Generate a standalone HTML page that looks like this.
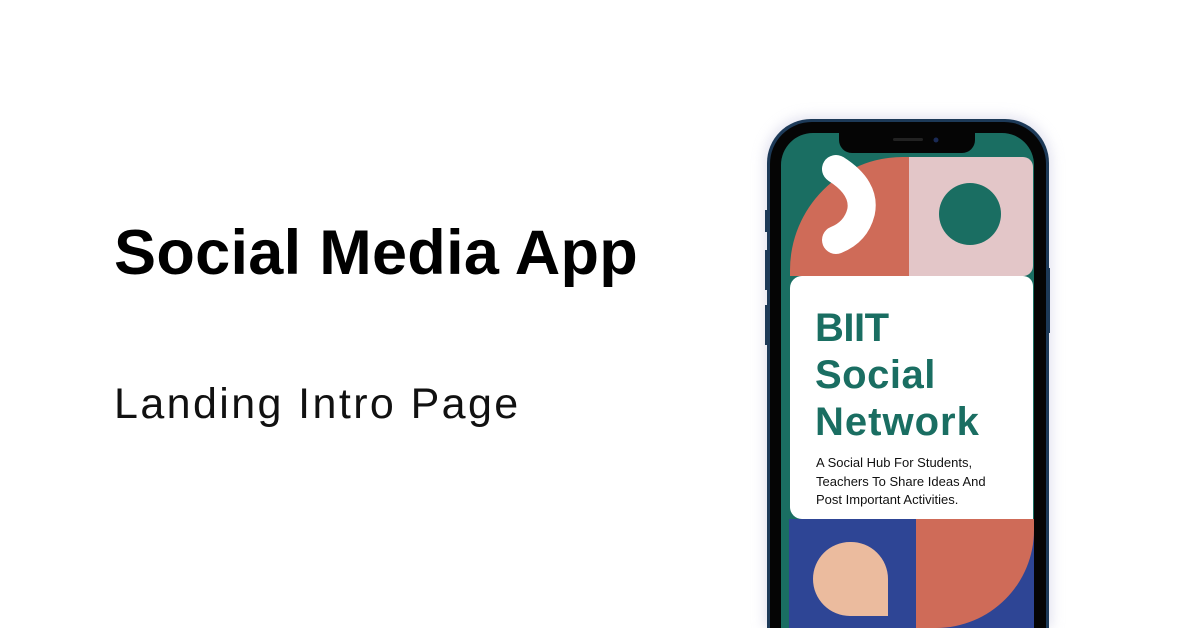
<!DOCTYPE html>
<html><head><meta charset="utf-8"><style>
html,body{margin:0;padding:0;width:1200px;height:628px;overflow:hidden;}
body{background:#fff;position:relative;font-family:"Liberation Sans",sans-serif;}
.t1{position:absolute;left:114px;top:218px;font-size:63px;font-weight:bold;color:#000;white-space:nowrap;letter-spacing:0.3px;line-height:70px;}
.t2{position:absolute;left:114px;top:379px;font-size:43px;color:#111;white-space:nowrap;line-height:50px;font-weight:normal;letter-spacing:2.4px;}
svg{display:block;}
</style></head><body>
<div class="t1">Social Media App</div>
<div class="t2">Landing Intro Page</div>
<svg width="1200" height="628" viewBox="0 0 1200 628" style="position:absolute;left:0;top:0">
<defs>
<filter id="sh" x="-20%" y="-20%" width="140%" height="140%"><feGaussianBlur stdDeviation="6"/></filter>
<clipPath id="scr"><path d="M813 133 H1002 A32 32 0 0 1 1034 165 V628 H781 V165 A32 32 0 0 1 813 133 Z"/></clipPath>
</defs>
<path d="M810 116 H1006 A46 46 0 0 1 1052 162 V628 H764 V162 A46 46 0 0 1 810 116 Z" fill="#c8c8e0" opacity="0.5" filter="url(#sh)"/>
<path d="M811 119 H1005 A44 44 0 0 1 1049 163 V628 H767 V163 A44 44 0 0 1 811 119 Z" fill="#1d3a58"/>
<path d="M812 122 H1004 A42 42 0 0 1 1046 164 V628 H770 V164 A42 42 0 0 1 812 122 Z" fill="#050505"/>
<rect x="765" y="210" width="3" height="22" fill="#1d3a58"/>
<rect x="765" y="250" width="3" height="40" fill="#1d3a58"/>
<rect x="765" y="305" width="3" height="40" fill="#1d3a58"/>
<rect x="1047" y="268" width="3" height="65" fill="#1d3a58"/>
<g clip-path="url(#scr)">
<rect x="781" y="133" width="253" height="495" fill="#1a6e62"/>
<path d="M790 276 V270 A113 113 0 0 1 903 157 H909 V276 Z" fill="#cf6b58"/>
<path d="M909 157 H1023 A10 10 0 0 1 1033 167 V266 A10 10 0 0 1 1023 276 H909 Z" fill="#e3c6c8"/>
<circle cx="970" cy="214" r="31" fill="#1a6e62"/>
<path d="M836 169 Q866 188 861 212 Q856 232 836 240" fill="none" stroke="#fff" stroke-width="28" stroke-linecap="round"/>
<rect x="789" y="519" width="245" height="109" fill="#2e4595"/>
<path d="M916 519 H1034 V530 A98 98 0 0 1 936 628 H916 Z" fill="#cf6b58"/>
<path d="M850 542 A37 37 0 0 1 888 579 V616 H850 A37 37 0 0 1 813 579 A37 37 0 0 1 850 542 Z" fill="#ebbb9e"/>
<path d="M802 276 H1023 A10 10 0 0 1 1033 286 V519 H802 A12 12 0 0 1 790 507 V288 A12 12 0 0 1 802 276 Z" fill="#fff"/>
</g>
<path d="M839 133 H975 V140 A13 13 0 0 1 962 153 H852 A13 13 0 0 1 839 140 Z" fill="#050505"/>
<rect x="893" y="138" width="30" height="3" rx="1.5" fill="#222"/>
<circle cx="936" cy="140" r="2.5" fill="#1a2a55"/>
<g font-family="Liberation Sans, sans-serif" fill="#1a6e62" font-weight="bold" font-size="40">
<text x="815" y="341" letter-spacing="-0.5">BIIT</text>
<text x="815" y="388" letter-spacing="0.5">Social</text>
<text x="815" y="435" letter-spacing="1">Network</text>
</g>
<g font-family="Liberation Sans, sans-serif" fill="#111" font-size="13">
<text x="816" y="467">A Social Hub For Students,</text>
<text x="816" y="486">Teachers To Share Ideas And</text>
<text x="816" y="504">Post Important Activities.</text>
</g>
</svg>
</body></html>
